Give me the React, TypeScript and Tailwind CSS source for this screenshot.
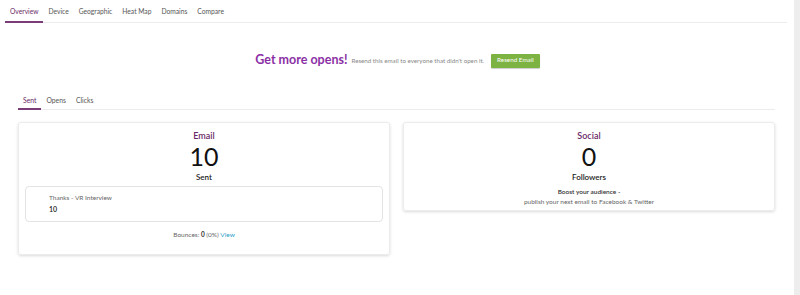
import React from "react";

const font = { fontFamily: "Lato, 'Noto Sans', sans-serif" };

export default function App() {
  const topTabs = ["Overview", "Device", "Geographic", "Heat Map", "Domains", "Compare"];
  return (
    <div className="w-[800px] h-[295px] flex bg-white overflow-hidden" style={font}>
      <div className="flex-1 flex flex-col pr-[7px]">
        {/* top tabs */}
        <div className="ml-[5px] flex border-b border-[#ececec] h-[23px] items-end">
          {topTabs.map((t, i) => (
            <div
              key={t}
              className={
                "h-[23px] flex items-center px-[5px] text-[6.7px] leading-none mb-[-1px] " +
                (i === 0
                  ? "border-b-2 border-[#7a3d78] text-[#6b2a68]"
                  : "border-b-2 border-transparent text-[#555]")
              }
            >
              <span className="pt-[1px]">{t}</span>
            </div>
          ))}
        </div>

        {/* banner */}
        <div className="flex items-center justify-center mt-[30px] h-[15px] gap-[3px] pl-[8px]">
          <span className="text-[12.5px] font-bold text-[#8b2fa5] leading-none">Get more opens!</span>
          <span className="text-[6.2px] text-[#888] leading-none ml-[1px] pt-[1px]">
            Resend this email to everyone that didn&apos;t open it.
          </span>
          <button className="ml-[4px] bg-[#7cb342] text-white text-[6.3px] h-[14px] px-[6px] rounded-[1px] leading-none shadow-[0_1px_1px_rgba(0,0,0,0.2)]">
            Resend Email
          </button>
        </div>

        {/* sub tabs + cards */}
        <div className="ml-[18px] mr-[12px] mt-[26px]">
          <div className="flex border-b border-[#ececec] h-[16px] items-end">
            {["Sent", "Opens", "Clicks"].map((t, i) => (
              <div
                key={t}
                className={
                  "h-[16px] flex items-start px-[5px] text-[6.8px] leading-none mb-[-1px] " +
                  (i === 0
                    ? "border-b-2 border-[#7a3d78] text-[#6b2a68]"
                    : "border-b-2 border-transparent text-[#555]")
                }
              >
                <span className="pt-[3px]">{t}</span>
              </div>
            ))}
          </div>

          <div className="grid grid-cols-2 gap-[13px] mt-[12px] items-start">
            {/* Email card */}
            <div className="h-[133px] border border-[#ececec] rounded-[3px] shadow-[0_1px_3px_rgba(0,0,0,0.15)] flex flex-col items-center">
              <div className="text-[9px] text-[#6b2a68] font-semibold leading-none mt-[8px]">Email</div>
              <div className="text-[25px] text-[#111] leading-none mt-[4px]">10</div>
              <div className="text-[8px] text-[#222] font-semibold leading-none mt-[4px]">Sent</div>
              <div className="self-stretch mx-[6px] mt-[5px] h-[36px] border border-[#e4e4e4] rounded-[4px] pl-[23px] flex flex-col justify-center gap-[5px]">
                <div className="text-[6.5px] text-[#666] leading-none">Thanks - VR Interview</div>
                <div className="text-[7px] text-[#222] font-semibold leading-none">10</div>
              </div>
              <div className="text-[6.5px] text-[#666] leading-none mt-[10px]">
                Bounces: <span className="font-bold text-[#333]">0</span> (0%){" "}
                <span className="text-[#2aa0c8]">View</span>
              </div>
            </div>

            {/* Social card */}
            <div className="h-[89px] border border-[#ececec] rounded-[3px] shadow-[0_1px_3px_rgba(0,0,0,0.15)] flex flex-col items-center">
              <div className="text-[9px] text-[#6b2a68] font-semibold leading-none mt-[8px]">Social</div>
              <div className="text-[25px] text-[#111] leading-none mt-[4px]">0</div>
              <div className="text-[8px] text-[#222] font-semibold leading-none mt-[4px]">Followers</div>
              <div className="text-[6.5px] text-[#333] font-semibold leading-none mt-[8px]">Boost your audience -</div>
              <div className="text-[6.5px] text-[#666] leading-none mt-[3px]">
                publish your next email to Facebook &amp; Twitter
              </div>
            </div>
          </div>
        </div>
      </div>
      <div className="w-[6px] h-full bg-[#ededed]" />
    </div>
  );
}
